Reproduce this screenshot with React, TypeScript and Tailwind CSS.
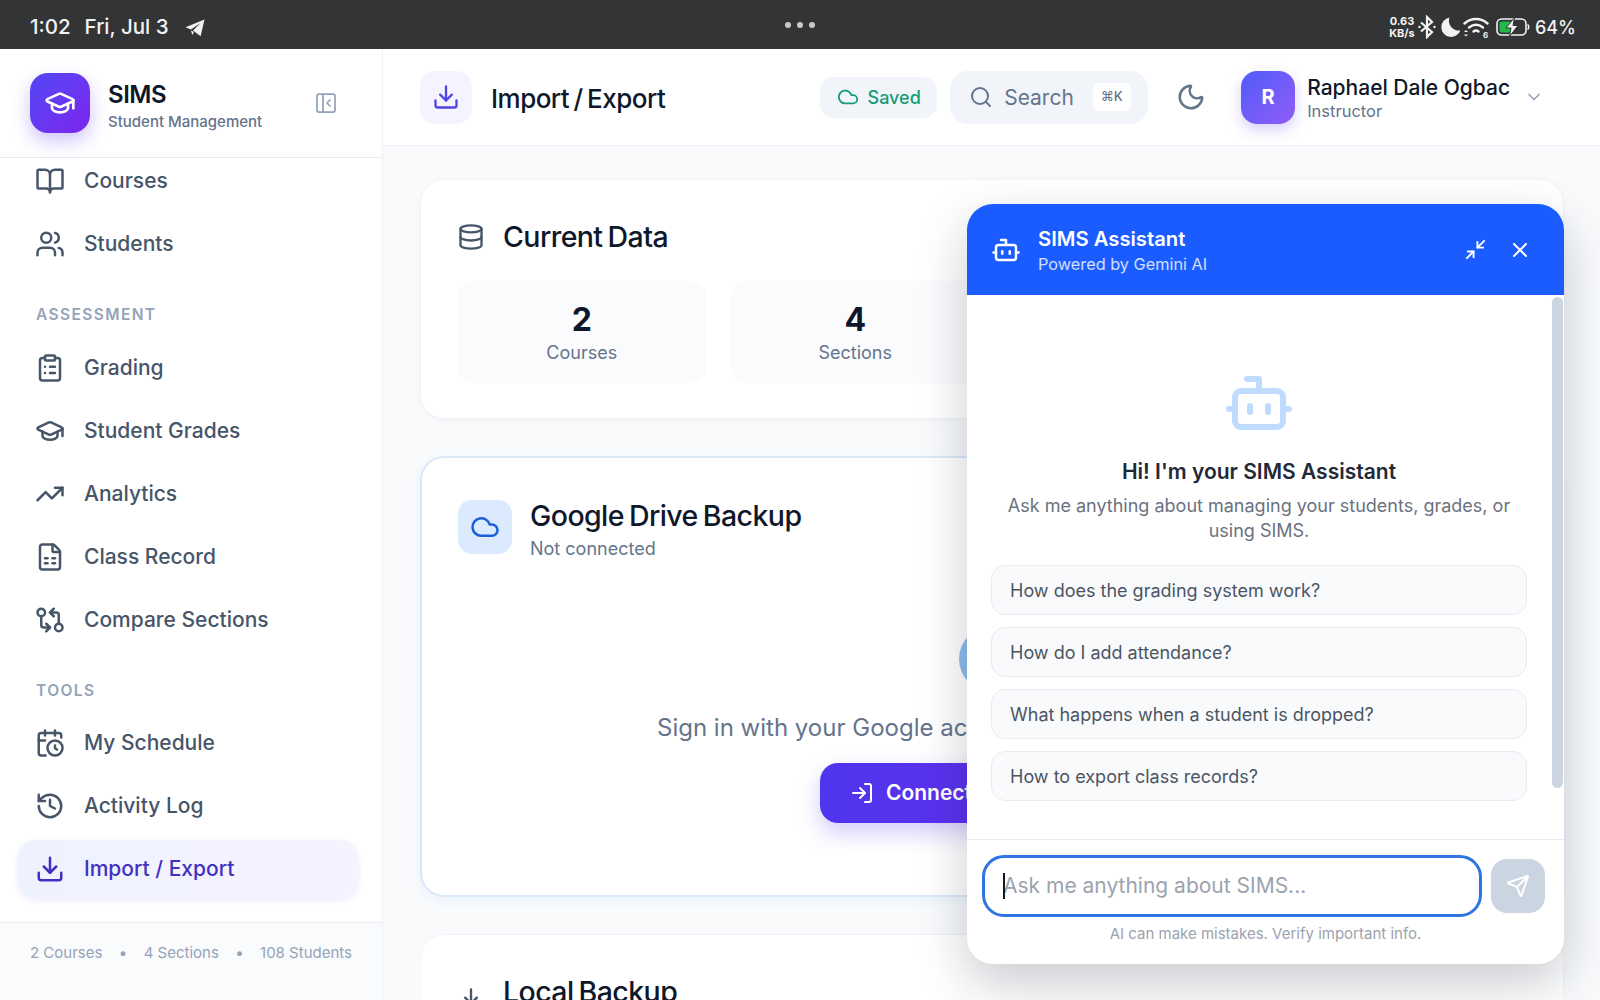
/**
 * SIMS — Import / Export page with the assistant chat panel open, under a tablet status bar.
 */

import type { ComponentType } from "react";
import {
  BookOpen,
  Bot,
  CalendarClock,
  ChevronDown,
  ClipboardList,
  Cloud,
  Database,
  Download,
  FileSpreadsheet,
  GitCompareArrows,
  GraduationCap,
  History,
  LogIn,
  Minimize2,
  Moon,
  PanelLeftClose,
  Search,
  Send,
  TrendingUp,
  Users,
  X,
} from "lucide-react";

type NavItem = { label: string; icon: ComponentType<{ size?: number; strokeWidth?: number; className?: string }>; active?: boolean };

const topNav: NavItem[] = [
  { label: "Courses", icon: BookOpen },
  { label: "Students", icon: Users },
];
const assessmentNav: NavItem[] = [
  { label: "Grading", icon: ClipboardList },
  { label: "Student Grades", icon: GraduationCap },
  { label: "Analytics", icon: TrendingUp },
  { label: "Class Record", icon: FileSpreadsheet },
  { label: "Compare Sections", icon: GitCompareArrows },
];
const toolsNav: NavItem[] = [
  { label: "My Schedule", icon: CalendarClock },
  { label: "Activity Log", icon: History },
  { label: "Import / Export", icon: Download, active: true },
];
const suggestions = [
  "How does the grading system work?",
  "How do I add attendance?",
  "What happens when a student is dropped?",
  "How to export class records?",
];

function NavRow({ item }: { item: NavItem }) {
  const Icon = item.icon;
  return (
    <div
      className={
        item.active
          ? "flex h-[58px] items-center gap-[19px] rounded-[18px] bg-gradient-to-r from-[#eef2ff] to-[#f6f3ff] px-[17px] text-[#4230c0] shadow-[0_2px_6px_rgba(79,70,229,0.12)]"
          : "flex h-[58px] items-center gap-[19px] px-[17px] text-[#475569]"
      }
    >
      <Icon size={30} strokeWidth={2} className="shrink-0" />
      <span className="text-[21px] font-medium">{item.label}</span>
    </div>
  );
}

function StatusBar() {
  return (
    <div className="relative flex h-[49px] shrink-0 items-center justify-between bg-[#333436] pl-[30px] pr-[24px] text-[#f2f2f2]">
      <div className="flex items-center pt-[6px]">
        <span className="text-[20.5px] font-medium">1:02</span>
        <span className="ml-[14px] text-[20.5px] font-medium">Fri, Jul 3</span>
        <svg width="20" height="18" viewBox="0 0 20 18" className="ml-[16px]" fill="#f2f2f2">
          <path d="M19.5 0.5 0.5 8.2l5.4 2.2L15.5 4 8 11.6l7.6 5.6z" />
          <path d="M6 11.5 7.2 16l1.8-3z" />
        </svg>
      </div>
      <div className="absolute left-[785px] top-[22px] flex gap-[6px]">
        <span className="h-[6px] w-[6px] rounded-full bg-[#c9c9c9]" />
        <span className="h-[6px] w-[6px] rounded-full bg-[#c9c9c9]" />
        <span className="h-[6px] w-[6px] rounded-full bg-[#c9c9c9]" />
      </div>
      <div className="flex items-center pt-[5px]">
        <div className="flex w-[24px] flex-col items-center text-[11px] font-bold leading-[12px]">
          <span>0.63</span>
          <span>KB/s</span>
        </div>
        <svg width="20" height="24" viewBox="0 0 20 24" className="ml-[3px]" fill="none" stroke="#f2f2f2" strokeWidth="2.2">
          <path d="M4 7.5 15 17l-5 5V2l5 5L4 16.5" />
          <circle cx="2.5" cy="12" r="1.2" fill="#f2f2f2" stroke="none" />
          <circle cx="17.5" cy="12" r="1.2" fill="#f2f2f2" stroke="none" />
        </svg>
        <svg width="20" height="20" viewBox="0 0 20 20" className="ml-[4px]" fill="#f2f2f2">
          <path d="M8.5 0.5A9.8 9.8 0 0 0 19.4 13.4 9.8 9.8 0 1 1 8.5 0.5z" />
        </svg>
        <svg width="27" height="22" viewBox="0 0 27 22" className="ml-[2px]" fill="none" stroke="#f2f2f2" strokeWidth="2.4" strokeLinecap="round">
          <path d="M1.5 7.5C8 1.5 18 1.5 24.5 7.5" />
          <path d="M6 11.5c4.5-3.5 9.5-3.5 14 0" />
          <path d="M10.5 15.5c1.8-1.4 3.2-1.4 5 0" />
          <path d="M1 16l2-2 2 2zM1 18.5l2 2 2-2z" fill="#f2f2f2" stroke="none" />
          <text x="20" y="21.5" fontSize="8" fontWeight="700" fill="#f2f2f2" stroke="none" fontFamily="Inter, sans-serif">6</text>
        </svg>
        <svg width="34" height="20" viewBox="0 0 34 20" className="ml-[6px]">
          <rect x="1" y="2" width="29" height="16" rx="4.5" fill="none" stroke="#f2f2f2" strokeWidth="1.6" />
          <rect x="3.5" y="4.5" width="12" height="11" rx="2" fill="#22b84a" />
          <path d="M31.5 7.5c1.6.6 1.6 4.4 0 5" fill="none" stroke="#f2f2f2" strokeWidth="1.6" />
          <path d="M18.5 0.5 10 11h5l-1.5 8.5L22 8.5h-5z" fill="#f2f2f2" stroke="#333436" strokeWidth="1" />
        </svg>
        <span className="ml-[5px] text-[18px] font-medium">64%</span>
      </div>
    </div>
  );
}

function Sidebar() {
  return (
    <aside className="flex w-[383px] shrink-0 flex-col border-r border-[#eef1f5] bg-white">
      <div className="flex h-[109px] shrink-0 items-center border-b border-[#e8ebf0] pl-[30px] pr-[44px]">
        <div className="flex h-[60px] w-[60px] items-center justify-center rounded-[18px] bg-gradient-to-br from-[#4f46f5] to-[#7c22ee] text-white shadow-[0_8px_18px_rgba(99,60,240,0.3)]">
          <GraduationCap size={32} strokeWidth={2} />
        </div>
        <div className="ml-[18px] flex-1 pt-[6px]">
          <div className="text-[24px] font-semibold leading-[30px] tracking-[-0.02em] text-[#0f172a]">SIMS</div>
          <div className="mt-[1px] text-[15px] font-medium leading-[22px] text-[#64748b]">Student Management</div>
        </div>
        <PanelLeftClose size={24} strokeWidth={1.75} className="text-[#94a3b8]" />
      </div>
      <nav className="min-h-0 flex-1 overflow-hidden pl-[18px] pr-[24px]">
        <div className="-mt-[6px] flex flex-col gap-[5px]">
          {topNav.map((item) => (
            <NavRow key={item.label} item={item} />
          ))}
        </div>
        <div className="mb-[13px] mt-[31px] h-[22px] pl-[18px] text-[15.5px] font-semibold leading-[22px] tracking-[0.09em] text-[#94a3b8]">ASSESSMENT</div>
        <div className="flex flex-col gap-[5px]">
          {assessmentNav.map((item) => (
            <NavRow key={item.label} item={item} />
          ))}
        </div>
        <div className="mb-[12px] mt-[31px] h-[22px] pl-[18px] text-[15.5px] font-semibold leading-[22px] tracking-[0.09em] text-[#94a3b8]">TOOLS</div>
        <div className="flex flex-col gap-[5px]">
          {toolsNav.map((item) => (
            <NavRow key={item.label} item={item} />
          ))}
        </div>
      </nav>
      <div className="flex h-[78px] shrink-0 items-start justify-between border-t border-[#e8ebf0] bg-[#fafbfd] pl-[30px] pr-[30px] pt-[19px] text-[15px] leading-[22px] text-[#94a3b8]">
        <span>2 Courses</span>
        <span>•</span>
        <span>4 Sections</span>
        <span>•</span>
        <span>108 Students</span>
      </div>
    </aside>
  );
}

function TopBar() {
  return (
    <header className="flex h-[97px] shrink-0 items-center border-b border-[#eef1f5] bg-white/80 pl-[37px] pr-[56px]">
      <div className="flex h-[53px] w-[52px] items-center justify-center rounded-[16px] bg-[#f5f3ff] text-[#4f46e5]">
        <Download size={28} strokeWidth={2} />
      </div>
      <h1 className="ml-[19px] flex-1 pt-[2px] text-[26px] font-medium tracking-[-0.02em] text-[#0f172a] [word-spacing:-2px]">Import / Export</h1>
      <div className="flex h-[41px] w-[117px] items-center justify-center gap-[9px] rounded-[14px] bg-[#f1f5f9] text-[18px] font-medium text-[#169c78]">
        <Cloud size={22} strokeWidth={2} />
        <span>Saved</span>
      </div>
      <div className="ml-[13px] flex h-[53px] w-[198px] items-center rounded-[18px] bg-[#f1f5f9] pl-[19px] text-[#64748b]">
        <Search size={24} strokeWidth={2} />
        <span className="ml-[11px] text-[21px] leading-none">Search</span>
        <span className="ml-[19px] flex h-[28px] w-[38px] items-center justify-center rounded-[6px] bg-white text-[13px] font-medium">⌘K</span>
      </div>
      <Moon size={30} strokeWidth={2} className="ml-[28px] text-[#64748b]" />
      <div className="ml-[35px] flex h-[53px] w-[54px] items-center justify-center rounded-[16px] bg-gradient-to-br from-[#4f5bfa] to-[#8f5cf6] text-[20px] font-bold text-white shadow-[0_6px_14px_rgba(99,80,240,0.25)]">R</div>
      <div className="ml-[12px] flex flex-col">
        <span className="text-[21px] font-medium leading-[28px] text-[#0f172a]">Raphael Dale Ogbac</span>
        <span className="text-[16.5px] leading-[19px] text-[#64748b]">Instructor</span>
      </div>
      <ChevronDown size={20} strokeWidth={2} className="ml-[14px] text-[#94a3b8]" />
    </header>
  );
}

function Stat({ value, label }: { value: string; label: string }) {
  return (
    <div className="flex h-[102px] flex-col items-center justify-center rounded-[16px] bg-[#fafbfd] pt-[2px]">
      <span className="text-[32px] font-bold leading-[40px] text-[#0f172a]">{value}</span>
      <span className="text-[18px] leading-[26px] text-[#64748b]">{label}</span>
    </div>
  );
}

function MainContent() {
  return (
    <div className="flex min-h-0 flex-1 flex-col gap-[37px] overflow-hidden bg-[#f8fafc] pl-[37px] pr-[36px] pt-[33px]">
      <section className="h-[240px] shrink-0 rounded-[24px] border border-[#f1f4f8] bg-white px-[36px] pt-[37px] shadow-[0_2px_6px_rgba(15,23,42,0.03)]">
        <div className="flex h-[40px] items-center gap-[18px]">
          <Database size={28} strokeWidth={2} className="text-[#475569]" />
          <h2 className="text-[28.5px] font-medium tracking-[-0.02em] text-[#0f172a] [word-spacing:-2px]">Current Data</h2>
        </div>
        <div className="mt-[24px] grid grid-cols-4 gap-[24px]">
          <Stat value="2" label="Courses" />
          <Stat value="4" label="Sections" />
          <Stat value="108" label="Students" />
        </div>
      </section>

      <section className="flex h-[441px] shrink-0 flex-col rounded-[24px] border-2 border-[#dbe8f8] bg-white px-[36px] pt-[42px] shadow-[0_4px_10px_rgba(59,130,246,0.06)]">
        <div className="flex items-start gap-[18px]">
          <div className="flex h-[54px] w-[54px] items-center justify-center rounded-[14px] bg-[#dbeafe] text-[#1d5fd8]">
            <Cloud size={30} strokeWidth={2} />
          </div>
          <div className="-mt-[4px]">
            <h2 className="text-[28.5px] font-medium leading-[40px] tracking-[-0.02em] text-[#0f172a] [word-spacing:-2px]">Google Drive Backup</h2>
            <p className="text-[18px] leading-[26px] text-[#64748b]">Not connected</p>
          </div>
        </div>
        <div className="mt-[64px] flex flex-col items-center">
          <div className="h-[66px] w-[66px] rounded-full bg-[#8dbcef]" />
          <p className="mt-[20px] w-[670px] whitespace-nowrap text-[24px] leading-[32px] text-[#64748b]">Sign in with your Google account to back up your data</p>
          <div className="mt-[19px] flex h-[60px] w-[344px] items-center gap-[12px] rounded-[18px] bg-gradient-to-r from-[#4f35ee] to-[#6a2bee] pl-[30px] text-[21px] font-semibold text-white shadow-[0_10px_22px_rgba(79,53,238,0.25)]">
            <LogIn size={24} strokeWidth={2} />
            <span>Connect Google Drive</span>
          </div>
        </div>
      </section>

      <section className="h-[200px] shrink-0 rounded-[24px] border border-[#f1f4f8] bg-white px-[36px] pt-[37px]">
        <div className="flex h-[40px] items-center gap-[18px]">
          <Download size={28} strokeWidth={2} className="mt-[16px] text-[#475569]" />
          <h2 className="text-[28.5px] font-medium tracking-[-0.02em] text-[#0f172a] [word-spacing:-2px]">Local Backup</h2>
        </div>
      </section>
    </div>
  );
}

function ChatPanel() {
  return (
    <div className="absolute bottom-[36px] right-[36px] flex h-[760px] w-[597px] flex-col overflow-hidden rounded-[26px] bg-white shadow-[0_20px_50px_rgba(15,23,42,0.22)]">
      <div className="flex h-[91px] shrink-0 items-center bg-[#1a5cff] pl-[24px] pr-[32px] text-white">
        <Bot size={30} strokeWidth={2} />
        <div className="ml-[17px] flex-1">
          <div className="text-[20.25px] font-semibold leading-[28px]">SIMS Assistant</div>
          <div className="text-[16.3px] leading-[22px] text-white/80">Powered by Gemini AI</div>
        </div>
        <Minimize2 size={23} strokeWidth={2} />
        <X size={24} strokeWidth={2} className="ml-[21px]" />
      </div>
      <div className="relative flex min-h-0 flex-1 flex-col items-center pl-[24px] pr-[37px] pt-[72px]">
        <div className="absolute right-[1px] top-[2px] h-[491px] w-[11px] rounded-full bg-[#cbd5e1]" />
        <Bot size={72} strokeWidth={2} className="text-[#bfdbfe]" />
        <h3 className="mt-[19px] text-[21px] font-semibold leading-[28px] text-[#1f2937]">Hi! I'm your SIMS Assistant</h3>
        <p className="mt-[7px] w-[520px] text-center text-[18px] leading-[25px] text-[#6b7280]">Ask me anything about managing your students, grades, or using SIMS.</p>
        <div className="mt-[22px] flex w-full flex-col gap-[12px]">
          {suggestions.map((text) => (
            <div key={text} className="flex h-[50px] items-center rounded-[14px] border border-[#e8ebf0] bg-[#f9fafc] px-[18px] text-[18px] text-[#4b5563]">
              {text}
            </div>
          ))}
        </div>
      </div>
      <div className="relative flex h-[125px] shrink-0 flex-col border-t border-[#e8ebf0] px-[15px] pt-[15px]">
        <div className="flex items-center gap-[9px]">
          <div className="relative h-[62px] w-[500px]">
            <input
              readOnly
              placeholder="Ask me anything about SIMS..."
              className="h-full w-full rounded-[22px] border-[3px] border-[#2f74e0] bg-white pl-[18px] pb-[2px] text-[21px] outline-none placeholder:text-[#9ca3af]"
            />
            <span className="absolute left-[21px] top-[18px] h-[26px] w-[2px] bg-[#111827]" />
          </div>
          <div className="flex h-[54px] w-[54px] items-center justify-center rounded-[16px] bg-[#cbd5e1] text-white">
            <Send size={24} strokeWidth={2} />
          </div>
        </div>
        <p className="mt-[7px] text-center text-[15px] leading-[20px] text-[#9ca3af]">AI can make mistakes. Verify important info.</p>
      </div>
    </div>
  );
}

export default function App() {
  return (
    <div className="relative flex h-screen w-screen flex-col overflow-hidden font-[Inter,sans-serif]">
      <StatusBar />
      <div className="flex min-h-0 flex-1">
        <Sidebar />
        <main className="flex min-w-0 flex-1 flex-col">
          <TopBar />
          <MainContent />
        </main>
      </div>
      <ChatPanel />
    </div>
  );
}
